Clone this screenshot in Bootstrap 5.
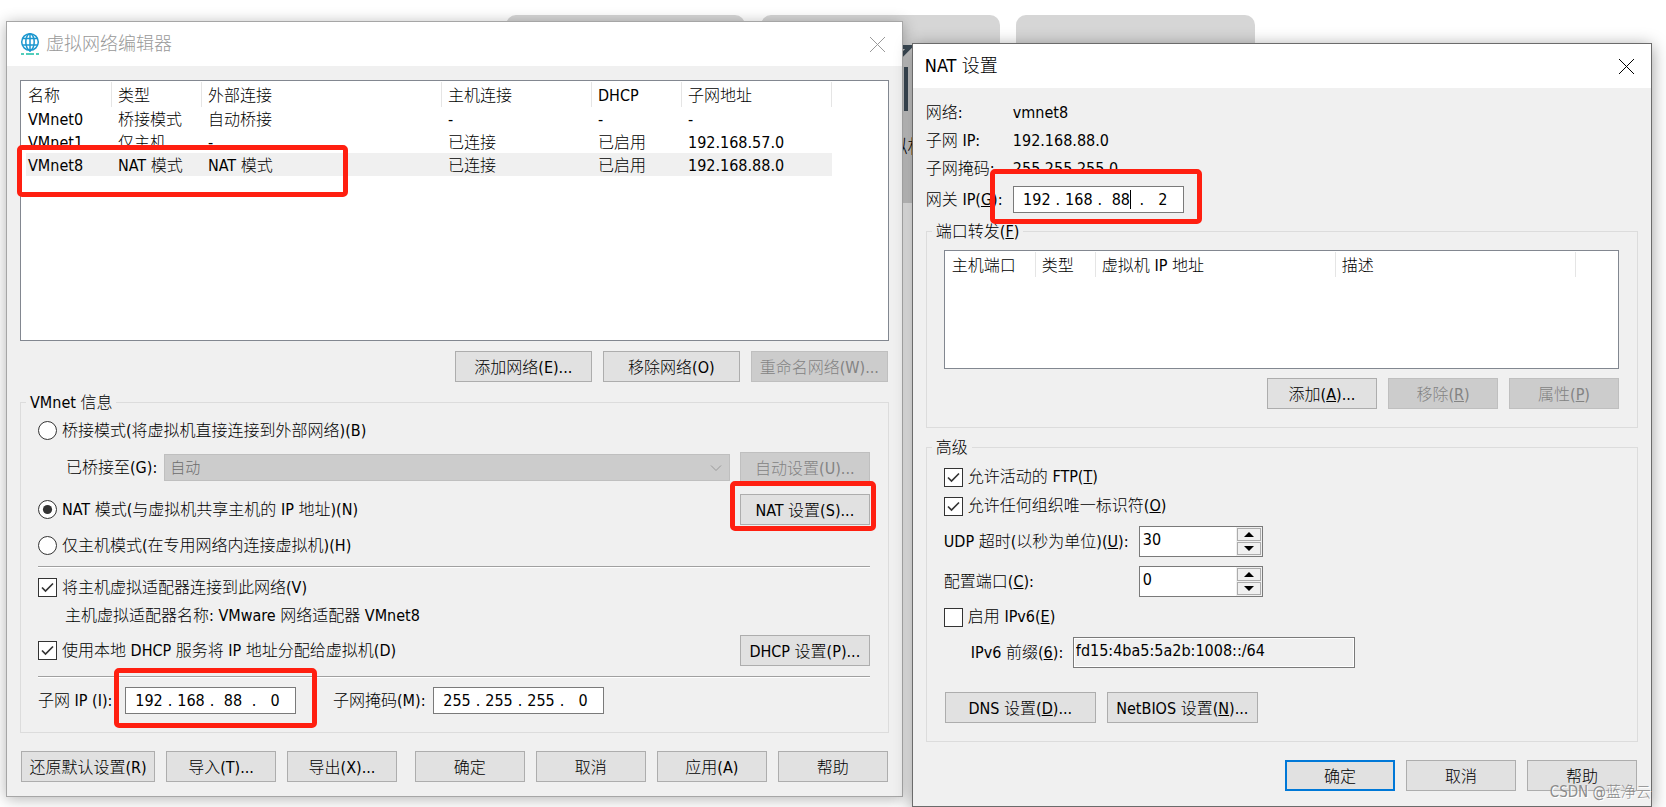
<!DOCTYPE html>
<html lang="zh-CN">
<head>
<meta charset="utf-8">
<meta name="viewport" content="width=device-width, initial-scale=1">
<title>虚拟网络编辑器</title>
<link rel="stylesheet" href="https://cdn.jsdelivr.net/npm/bootstrap@5.3.0/dist/css/bootstrap.min.css">
<style>
  :root { --mark: #ff1f10; --face: #f0f0f0; --edge: #adadad; }
  body { font-family: "DejaVu Sans Condensed", "Noto Sans CJK SC", sans-serif; font-size: 16px; line-height: 24px; font-weight: 300; color: #000; background: #fff; }

  /* page behind the dialogs */
  .backdrop { top: 15px; left: 506px; gap: 16px; }
  .tile { width: 239px; height: 188px; border-radius: 10px; background: #d6d6d6; font-size: 18px; }
  .tile svg { width: 62px; height: 68px; margin-top: 30px; }
  .tile-name { margin-top: 22px; }

  /* dialogs */
  .desktop { gap: 9px; padding: 21px 14px 0 6px; }
  .dialog { background: var(--face); min-width: 0; }
  .dialog-main { flex: 897 1 0; border: 1px solid #a6a6a6; box-shadow: 0 2px 14px rgba(0,0,0,.3); }
  .dialog-nat { flex: 740 1 0; margin-top: 22px; border: 1px solid #6b6b6b; box-shadow: 0 3px 16px rgba(0,0,0,.4); }
  .titlebar { height: 44px; background: #fff; padding: 0 16px 0 12px; font-size: 18px; }
  .titlebar h1 { font-size: 18px; line-height: 24px; font-weight: 300; }
  .dialog-main .titlebar { color: #999; }
  .app-icon { margin-right: 5px; }
  .close-x { width: 17px; height: 17px; padding: 1px; border: 0; background: none; color: inherit; line-height: 0; }
  .body-main { padding: 14px 13px; }
  .body-nat { padding: 11px 13px 15px; }

  .btn-win { --bs-btn-padding-x: 0; --bs-btn-padding-y: 0; --bs-btn-font-size: 16px; --bs-btn-line-height: 24px; --bs-btn-font-weight: 300;
    --bs-btn-border-radius: 0; --bs-btn-color: #000; --bs-btn-bg: #e1e1e1; --bs-btn-border-color: #adadad;
    --bs-btn-hover-bg: #e5f1fb; --bs-btn-hover-border-color: #0078d7; --bs-btn-hover-color: #000;
    --bs-btn-disabled-color: #838383; --bs-btn-disabled-bg: #ccc; --bs-btn-disabled-border-color: #bfbfbf; --bs-btn-disabled-opacity: 1;
    height: 31px; width: 110px; padding-top: 2px; white-space: nowrap; }
  .btn-win.is-default { border: 2px solid #0078d7; }
  .w-net { width: 137px; } .w-reset { width: 134px; } .w-set { width: 130px; } .w-adv { width: 151px; }
  .gap-btn { gap: 11px; }

  .listbox { background: #fff; border: 1px solid #828790; padding: 1px 0 0 5px; }
  .listbox table { table-layout: fixed; border-collapse: separate; border-spacing: 0; width: 806px; }
  .listbox th { font-weight: 300; height: 25px; line-height: 23px; padding: 2px 0 0 6px; border-right: 1px solid #e5e5e5; white-space: nowrap; }
  .listbox td { height: 23px; line-height: 21px; padding: 2px 0 0 6px; white-space: nowrap; }
  .listbox th:first-child, .listbox td:first-child { padding-left: 2px; }
  .listbox tr.picked td { background: var(--face); }
  .list-net { height: 261px; overflow: visible; }
  .list-port { height: 119px; }
  .list-port table { width: 626px; }

  fieldset.group { border: 1px solid #dcdcdc; padding: 1px 18px 18px 17px; }
  fieldset.group legend { float: none; width: auto; margin: 0 0 0 -12px; padding: 2px 4px 0; font-size: 16px; line-height: 22px; }
  .group-vm { margin-top: 8px; }
  .line { min-height: 31px; display: flex; align-items: center; }
  .line-sm { min-height: 28px; display: flex; align-items: center; }
  .etch { height: 2px; border: 0; border-top: 1px solid #a0a0a0; border-bottom: 1px solid #fff; opacity: 1; margin: 0; }

  .opt { display: flex; align-items: center; gap: 5px; white-space: nowrap; }
  .opt .form-check-input { width: 19px; height: 19px; margin: 0; border: 1px solid #333; background-color: #fff; box-shadow: none; flex: none; }
  .opt .form-check-input[type=checkbox] { border-radius: 0; }
  .opt .form-check-input[type=checkbox]:checked { background-image: url("data:image/svg+xml,%3Csvg xmlns='http://www.w3.org/2000/svg' viewBox='0 0 17 17'%3E%3Cpath d='M3 8.500L6.500 12L14 4.500' fill='none' stroke='%23333' stroke-width='1.700'/%3E%3C/svg%3E"); }
  .opt .form-check-input[type=radio]:checked { background-image: url("data:image/svg+xml,%3Csvg xmlns='http://www.w3.org/2000/svg' viewBox='0 0 17 17'%3E%3Ccircle cx='8.500' cy='8.500' r='4.600' fill='%23333'/%3E%3C/svg%3E"); }

  .combo { height: 27px; padding: 0 24px 0 5px; font-size: 15px; line-height: 24px; font-weight: 300; border: 1px solid #bfbfbf; border-radius: 0; margin: 0 10px 0 7px; }
  .combo:disabled { color: #6d6d6d; background-color: #ccc; opacity: 1; background-position: right 7px center; background-size: 12px 12px;
    background-image: url("data:image/svg+xml,%3Csvg xmlns='http://www.w3.org/2000/svg' viewBox='0 0 12 12'%3E%3Cpath d='M1 3.500L6 8.500L11 3.500' fill='none' stroke='%23999'/%3E%3C/svg%3E"); }

  .ipbox { width: 171px; height: 27px; background: #fff; border: 1px solid #7a7a7a; padding-left: 7px; display: flex; align-items: center; position: relative; flex: none; }
  .ipbox input { width: 32px; padding: 0; border: 0; background: none; text-align: center; font-weight: 300; line-height: 24px; height: 24px; outline: 0; color: #000; }
  .ipbox i { width: 10px; text-align: center; font-style: normal; }
  .cursor { position: absolute; left: 116px; top: 3px; width: 1px; height: 19px; background: #000; }

  .mark-box { position: absolute; border: 5px solid var(--mark); border-radius: 5px; pointer-events: none; z-index: 2; }
  .mark-row { left: -4px; top: 64px; width: 331px; height: 52px; }
  .mark-btn { inset: -13px -6px -6px -10px; }
  .mark-subnet { inset: -20px -22px -15px -12px; }
  .mark-gate { inset: -18px -19px -12px -24px; }

  .term { width: 87px; white-space: nowrap; flex: none; }
  .spin { width: 124px; height: 31px; border: 1px solid #7a7a7a; background: #fff; }
  .spin input { min-width: 0; flex: 1; border: 0; padding: 0 0 4px 3px; background: none; font-weight: 300; line-height: 24px; appearance: textfield; -moz-appearance: textfield; outline: 0; color: #000; }
  .spin input::-webkit-inner-spin-button { display: none; }
  .spin-keys { width: 26px; padding: 1px; gap: 1px; background: var(--face); }
  .spin-keys button { flex: 1; padding: 0; border: 1px solid #acacac; background: var(--face); line-height: 0; display: flex; align-items: center; justify-content: center; }
  .lab-spin { width: 195px; } .lab-prefix { width: 102px; }
  .prefix { width: 282px; height: 31px; border: 1px solid #7a7a7a; background: var(--face); padding: 0 2px 4px; font-weight: 300; box-shadow: inset 0 0 0 1px #fff; color: #000; }
  .stamp { right: 0; bottom: 2px; font-size: 15px; color: #8b8b8b; text-shadow: 1px 1px 0 #fff; pointer-events: none; white-space: nowrap; }
</style>
</head>
<body>
<div class="position-relative overflow-hidden">
  <div class="backdrop position-absolute d-flex" aria-hidden="true">
    <div class="tile"></div>
    <div class="tile text-center">
      <svg viewBox="0 0 62 68" fill="none" stroke="#41505c" stroke-width="4"><path d="M2 66V2H60L38 24M56 22V66"/></svg>
      <div class="tile-name">打开虚拟机</div>
    </div>
    <div class="tile"></div>
  </div>

  <main class="desktop position-relative d-flex align-items-start">
    <section class="dialog dialog-main" aria-label="虚拟网络编辑器">
      <header class="titlebar d-flex align-items-center justify-content-between">
        <div class="d-flex align-items-center">
          <svg width="22" height="24" viewBox="0 0 22 24" fill="none" stroke="#1c97cf" stroke-width="1.500" class="app-icon" aria-hidden="true"><circle cx="11" cy="10" r="8.300"/><ellipse cx="11" cy="10" rx="4.200" ry="8.300"/><path d="M11 2V20M3.500 6.500H18.500M3 13H19"/><path d="M2 22H5M7 22H15M17 22H20" stroke="#19bfa5"/></svg>
          <h1 class="m-0">虚拟网络编辑器</h1>
        </div>
        <button class="close-x" type="button" aria-label="关闭"><svg width="15" height="15" viewBox="0 0 15 15" stroke="currentColor" fill="none"><path d="M0 0L15 15M15 0L0 15"/></svg></button>
      </header>
      <div class="body-main">
        <div class="listbox list-net position-relative">
          <table>
            <colgroup><col width="86"><col width="90"><col width="240"><col width="150"><col width="90"><col width="150"></colgroup>
            <thead><tr><th>名称</th><th>类型</th><th>外部连接</th><th>主机连接</th><th>DHCP</th><th>子网地址</th></tr></thead>
            <tbody>
              <tr><td>VMnet0</td><td>桥接模式</td><td>自动桥接</td><td>-</td><td>-</td><td>-</td></tr>
              <tr><td>VMnet1</td><td>仅主机</td><td>-</td><td>已连接</td><td>已启用</td><td>192.168.57.0</td></tr>
              <tr class="picked"><td>VMnet8</td><td>NAT 模式</td><td>NAT 模式</td><td>已连接</td><td>已启用</td><td>192.168.88.0</td></tr>
            </tbody>
          </table>
          <span class="mark-box mark-row"></span>
        </div>
        <div class="d-flex justify-content-end gap-btn" style="margin:10px 1px 0 0">
          <button type="button" class="btn btn-win w-net">添加网络(E)...</button>
          <button type="button" class="btn btn-win w-net">移除网络(O)</button>
          <button type="button" class="btn btn-win w-net" disabled>重命名网络(W)...</button>
        </div>

        <fieldset class="group group-vm">
          <legend>VMnet 信息</legend>
          <div class="line"><label class="opt"><input class="form-check-input" type="radio" name="mode">桥接模式(将虚拟机直接连接到外部网络)(B)</label></div>
          <div class="line" style="margin-top:6px;padding-left:28px">
            <label for="bridge" class="text-nowrap">已桥接至(G):</label>
            <select id="bridge" class="form-select combo flex-fill w-auto" disabled><option>自动</option></select>
            <button type="button" class="btn btn-win w-set" disabled>自动设置(U)...</button>
          </div>
          <div class="line justify-content-between" style="margin-top:11px">
            <label class="opt"><input class="form-check-input" type="radio" name="mode" checked>NAT 模式(与虚拟机共享主机的 IP 地址)(N)</label>
            <div class="position-relative d-flex"><button type="button" class="btn btn-win w-set">NAT 设置(S)...</button><span class="mark-box mark-btn"></span></div>
          </div>
          <div class="line" style="margin:5px 0"><label class="opt"><input class="form-check-input" type="radio" name="mode">仅主机模式(在专用网络内连接虚拟机)(H)</label></div>
          <hr class="etch">
          <div class="line" style="margin-top:4px"><label class="opt"><input class="form-check-input" type="checkbox" checked>将主机虚拟适配器连接到此网络(V)</label></div>
          <div style="padding:1px 0 1px 27px">主机虚拟适配器名称: VMware 网络适配器 VMnet8</div>
          <div class="line justify-content-between" style="margin:6px 0 10px">
            <label class="opt"><input class="form-check-input" type="checkbox" checked>使用本地 DHCP 服务将 IP 地址分配给虚拟机(D)</label>
            <button type="button" class="btn btn-win w-set">DHCP 设置(P)...</button>
          </div>
          <hr class="etch">
          <div class="d-flex align-items-center" style="margin-top:9px">
            <label for="s1" class="text-nowrap term">子网 IP (I):</label>
            <div class="ipbox"><input id="s1" value="192"><i>.</i><input value="168" aria-label="子网 2"><i>.</i><input value="88" aria-label="子网 3"><i>.</i><input value="0" aria-label="子网 4"><span class="mark-box mark-subnet"></span></div>
            <label for="m1" class="text-nowrap" style="width:100px;margin-left:37px">子网掩码(M):</label>
            <div class="ipbox"><input id="m1" value="255"><i>.</i><input value="255" aria-label="掩码 2"><i>.</i><input value="255" aria-label="掩码 3"><i>.</i><input value="0" aria-label="掩码 4"></div>
          </div>
        </fieldset>

        <div class="d-flex justify-content-between" style="margin:18px 1px 0">
          <div class="d-flex gap-btn">
            <button type="button" class="btn btn-win w-reset">还原默认设置(R)</button>
            <button type="button" class="btn btn-win">导入(T)...</button>
            <button type="button" class="btn btn-win">导出(X)...</button>
          </div>
          <div class="d-flex gap-btn">
            <button type="button" class="btn btn-win">确定</button>
            <button type="button" class="btn btn-win">取消</button>
            <button type="button" class="btn btn-win">应用(A)</button>
            <button type="button" class="btn btn-win">帮助</button>
          </div>
        </div>
      </div>
    </section>

    <section class="dialog dialog-nat position-relative" aria-label="NAT 设置">
      <header class="titlebar d-flex align-items-center justify-content-between">
        <h1 class="m-0">NAT 设置</h1>
        <button class="close-x" type="button" aria-label="关闭"><svg width="15" height="15" viewBox="0 0 15 15" stroke="currentColor" fill="none"><path d="M0 0L15 15M15 0L0 15"/></svg></button>
      </header>
      <div class="body-nat">
        <div class="line-sm"><span class="term">网络:</span><span>vmnet8</span></div>
        <div class="line-sm"><span class="term">子网 IP:</span><span>192.168.88.0</span></div>
        <div class="line-sm"><span class="term">子网掩码:</span><span>255.255.255.0</span></div>
        <div class="d-flex align-items-center" style="margin-top:3px">
          <label for="g1" class="term">网关 IP(<u>G</u>):</label>
          <div class="ipbox"><input id="g1" value="192"><i>.</i><input value="168" aria-label="网关 2"><i>.</i><input value="88" aria-label="网关 3"><i>.</i><input value="2" aria-label="网关 4"><span class="cursor"></span><span class="mark-box mark-gate"></span></div>
        </div>

        <fieldset class="group" style="margin-top:6px">
          <legend>端口转发(<u>F</u>)</legend>
          <div class="listbox list-port" style="margin:6px 0 9px">
            <table>
              <colgroup><col width="86"><col width="60"><col width="240"><col width="240"></colgroup>
              <thead><tr><th>主机端口</th><th>类型</th><th>虚拟机 IP 地址</th><th>描述</th></tr></thead>
            </table>
          </div>
          <div class="d-flex justify-content-end gap-btn">
            <button type="button" class="btn btn-win">添加(<u>A</u>)...</button>
            <button type="button" class="btn btn-win" disabled>移除(<u>R</u>)</button>
            <button type="button" class="btn btn-win" disabled>属性(<u>P</u>)</button>
          </div>
        </fieldset>

        <fieldset class="group" style="margin-top:7px">
          <legend>高级</legend>
          <div class="line-sm" style="margin-top:3px"><label class="opt"><input class="form-check-input" type="checkbox" checked><span>允许活动的 FTP(<u>T</u>)</span></label></div>
          <div class="line-sm" style="margin-top:1px"><label class="opt"><input class="form-check-input" type="checkbox" checked><span>允许任何组织唯一标识符(<u>O</u>)</span></label></div>
          <div class="line" style="margin-top:6px">
            <label for="udp" class="lab-spin text-nowrap">UDP 超时(以秒为单位)(<u>U</u>):</label>
            <div class="spin d-flex"><input id="udp" type="number" value="30"><div class="spin-keys d-flex flex-column"><button type="button" aria-label="增加"><svg width="10" height="5" viewBox="0 0 10 5"><path d="M0 5L5 0L10 5Z"/></svg></button><button type="button" aria-label="减少"><svg width="10" height="5" viewBox="0 0 10 5"><path d="M0 0L5 5L10 0Z"/></svg></button></div></div>
          </div>
          <div class="line" style="margin-top:9px">
            <label for="port" class="lab-spin text-nowrap">配置端口(<u>C</u>):</label>
            <div class="spin d-flex"><input id="port" type="number" value="0"><div class="spin-keys d-flex flex-column"><button type="button" aria-label="增加"><svg width="10" height="5" viewBox="0 0 10 5"><path d="M0 5L5 0L10 5Z"/></svg></button><button type="button" aria-label="减少"><svg width="10" height="5" viewBox="0 0 10 5"><path d="M0 0L5 5L10 0Z"/></svg></button></div></div>
          </div>
          <div class="line-sm" style="margin:6px 0"><label class="opt"><input class="form-check-input" type="checkbox"><span>启用 IPv6(<u>E</u>)</span></label></div>
          <div class="line" style="padding-left:27px">
            <label for="prefix" class="lab-prefix text-nowrap">IPv6 前缀(<u>6</u>):</label>
            <input id="prefix" class="prefix" readonly value="fd15:4ba5:5a2b:1008::/64">
          </div>
          <div class="d-flex gap-btn" style="margin:24px 0 0 1px">
            <button type="button" class="btn btn-win w-adv">DNS 设置(<u>D</u>)...</button>
            <button type="button" class="btn btn-win w-adv">NetBIOS 设置(<u>N</u>)...</button>
          </div>
        </fieldset>

        <div class="d-flex justify-content-end gap-btn" style="margin:18px 1px 0 0">
          <button type="button" class="btn btn-win is-default">确定</button>
          <button type="button" class="btn btn-win">取消</button>
          <button type="button" class="btn btn-win">帮助</button>
        </div>
      </div>
      <span class="stamp position-absolute">CSDN @蓝净云</span>
    </section>
  </main>
</div>
<script src="https://cdn.jsdelivr.net/npm/bootstrap@5.3.0/dist/js/bootstrap.bundle.min.js"></script>
</body>
</html>
